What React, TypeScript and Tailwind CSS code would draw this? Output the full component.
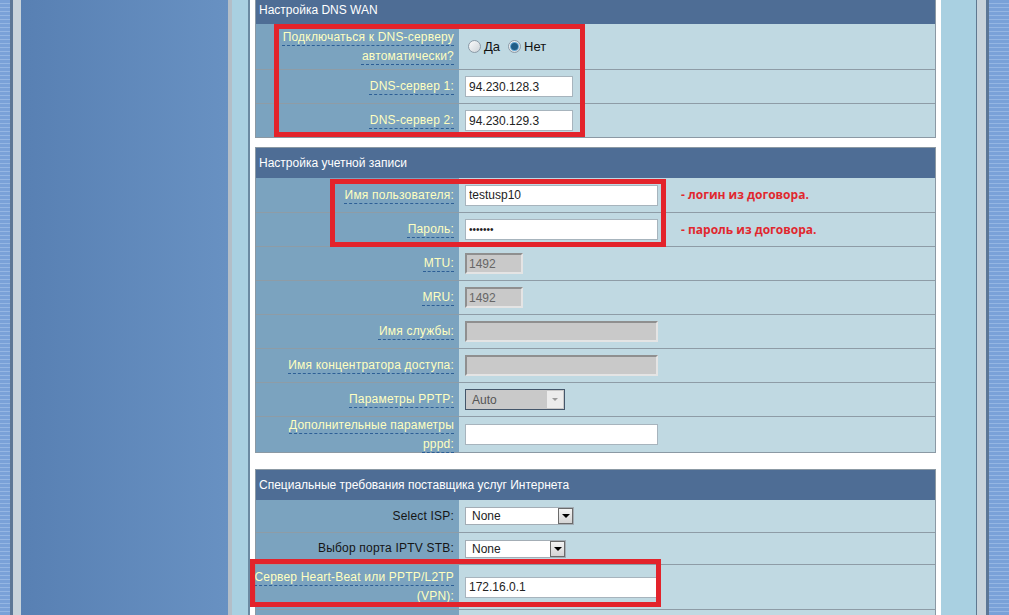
import type { ReactNode } from 'react';
import clsx from 'clsx';

const STRIPES =
  'bg-[image:repeating-linear-gradient(180deg,#7aa1d8_0px,#7aa1d8_3px,#95b6e3_3px,#95b6e3_4px)]';

function Row({
  h,
  label,
  plain,
  first,
  children,
}: {
  h: string;
  label: string[];
  plain?: boolean;
  first?: boolean;
  children?: ReactNode;
}) {
  return (
    <div className={clsx('flex', h, !first && 'border-t border-[#8e9ca6]')}>
      <div className="flex w-[203px] shrink-0 flex-col items-end justify-center bg-[#7ba3bf] pr-[5px] leading-[19px] tracking-[0.2px]">
        {label.map((line) => (
          <span
            key={line}
            className={clsx(
              'whitespace-nowrap',
              plain
                ? 'text-[#151515]'
                : 'text-[#ffffc0] underline decoration-dashed decoration-[#2d5f96] underline-offset-[4px]'
            )}
          >
            {line}
          </span>
        ))}
      </div>
      <div className="flex flex-1 items-center bg-[#c0d9e2] pl-[6px]">{children}</div>
    </div>
  );
}

function TextBox({ value, type = 'text' }: { value?: string; type?: string }) {
  return (
    <input
      readOnly
      type={type}
      value={value ?? ''}
      className={clsx(
        'h-[21px] w-[193px] border border-[#a7b4bd] bg-white pl-[3px] text-[#222] outline-none',
        type === 'password' ? 'text-[10px]' : 'text-[12px]'
      )}
    />
  );
}

function DnsBox({ value }: { value: string }) {
  return (
    <input
      readOnly
      value={value}
      className="h-[21px] w-[108px] border border-[#a7b4bd] bg-white pl-[3px] text-[12px] text-[#222] outline-none"
    />
  );
}

function Disabled({ value, wide }: { value?: string; wide?: boolean }) {
  return (
    <input
      readOnly
      value={value ?? ''}
      className={clsx(
        'h-[21px] border-2 border-t-[#8f8f8f] border-l-[#8f8f8f] border-r-[#e4e4e4] border-b-[#e4e4e4] bg-[#c9c9c9] pl-[2px] text-[12px] text-[#666] outline-none',
        wide ? 'w-[193px]' : 'w-[58px]'
      )}
    />
  );
}

function IspSelect({ w }: { w: string }) {
  return (
    <div className={clsx('flex h-[18px] items-center border border-[#a3adb5] bg-white', w)}>
      <span className="flex-1 pl-[6px] text-[12px] text-[#222]">None</span>
      <span className="flex h-[16px] w-[15px] items-center justify-center border border-[#6b6b6b] bg-linear-to-b from-[#f4f4f4] to-[#d4d4d4]">
        <span className="border-x-[4px] border-t-[4px] border-x-transparent border-t-black" />
      </span>
    </div>
  );
}

function Radio({ checked, text }: { checked?: boolean; text: string }) {
  return (
    <span className="flex items-center gap-[3px]">
      <span className="flex h-[13px] w-[13px] items-center justify-center rounded-full border border-[#8b9aa7] bg-linear-to-br from-[#fbfbfb] to-[#cdd4d9]">
        {checked && <span className="h-[7px] w-[7px] rounded-full bg-[#1f5c86] ring-1 ring-[#62a6d4]" />}
      </span>
      <span className="text-[13px] text-[#111]">{text}</span>
    </span>
  );
}

function Note({ children }: { children: ReactNode }) {
  return (
    <span className="ml-[23px] font-['Open_Sans',sans-serif] text-[12px] font-bold text-[#e0282e]">
      {children}
    </span>
  );
}

function Header({ children, short }: { children: ReactNode; short?: boolean }) {
  return (
    <div
      className={clsx(
        'flex items-center bg-[#4e6d95] pl-[3px] text-[12px] text-white',
        short ? 'h-[24px] pb-[4px]' : 'h-[30px]'
      )}
    >
      {children}
    </div>
  );
}

export default function App() {
  return (
    <div className="flex h-[615px] w-[1009px] overflow-hidden bg-white font-['Liberation_Sans',Arial,sans-serif] text-[12px]">
      {/* left frame */}
      <div className={clsx('w-[10px] shrink-0', STRIPES)} />
      <div className="w-[3px] shrink-0 bg-[#5b7696]" />
      <div className="w-[8px] shrink-0 bg-[#c8d3db]" />
      <div className="w-[207px] shrink-0 bg-linear-to-r from-[#5880b3] to-[#6891c2]" />
      <div className="w-[4px] shrink-0 bg-[#b3bec8]" />
      <div className="w-[16px] shrink-0 bg-[#a9d0e1]" />
      <div className="w-[2px] shrink-0 bg-[#6a8aa2]" />

      {/* content */}
      <main className="relative w-[691px] shrink-0 bg-white px-[5px]">
        <section className="border-x border-b border-[#8b99a4]">
          <Header short>Настройка DNS WAN</Header>
          <Row first h="h-[45px]" label={['Подключаться к DNS-серверу', 'автоматически?']}>
            <div className="flex items-center gap-[8px] pl-[3px]">
              <Radio text="Да" />
              <Radio checked text="Нет" />
            </div>
          </Row>
          <Row h="h-[34px]" label={['DNS-сервер 1:']}>
            <DnsBox value="94.230.128.3" />
          </Row>
          <Row h="h-[34px]" label={['DNS-сервер 2:']}>
            <DnsBox value="94.230.129.3" />
          </Row>
        </section>

        <section className="mt-[9px] border border-[#8b99a4]">
          <Header>Настройка учетной записи</Header>
          <Row first h="h-[34px]" label={['Имя пользователя:']}>
            <TextBox value="testusp10" />
            <Note>- логин из договора.</Note>
          </Row>
          <Row h="h-[34px]" label={['Пароль:']}>
            <TextBox type="password" value="1234567" />
            <Note>- пароль из договора.</Note>
          </Row>
          <Row h="h-[34px]" label={['MTU:']}>
            <Disabled value="1492" />
          </Row>
          <Row h="h-[34px]" label={['MRU:']}>
            <Disabled value="1492" />
          </Row>
          <Row h="h-[34px]" label={['Имя службы:']}>
            <Disabled wide />
          </Row>
          <Row h="h-[34px]" label={['Имя концентратора доступа:']}>
            <Disabled wide />
          </Row>
          <Row h="h-[34px]" label={['Параметры PPTP:']}>
            <div className="flex h-[21px] w-[100px] items-center border border-[#44566a] bg-[#c9c9c9]">
              <span className="flex-1 pl-[6px] text-[12px] text-[#555]">Auto</span>
              <span className="mr-[1px] flex h-[17px] w-[16px] items-center justify-center bg-[#ececec]">
                <span className="border-x-[3px] border-t-[3px] border-x-transparent border-t-[#9a9a9a]" />
              </span>
            </div>
          </Row>
          <Row h="h-[36px]" label={['Дополнительные параметры', 'pppd:']}>
            <TextBox />
          </Row>
        </section>

        <section className="mt-[16px] border border-[#8b99a4]">
          <Header>Специальные требования поставщика услуг Интернета</Header>
          <Row first plain h="h-[32px]" label={['Select ISP:']}>
            <IspSelect w="w-[109px]" />
          </Row>
          <Row plain h="h-[32px]" label={['Выбор порта IPTV STB:']}>
            <IspSelect w="w-[101px]" />
          </Row>
          <Row h="h-[45px]" label={['Сервер Heart-Beat или PPTP/L2TP', '(VPN):']}>
            <TextBox value="172.16.0.1" />
          </Row>
          <Row h="h-[34px]" label={[]} />
        </section>

        {/* red annotation frames */}
        <div className="pointer-events-none absolute left-[24px] top-[24px] h-[113px] w-[311px] border-[5px] border-[#e3232b]" />
        <div className="pointer-events-none absolute left-[80px] top-[179px] h-[68px] w-[336px] border-[5px] border-[#e3232b]" />
        <div className="pointer-events-none absolute left-0 top-[559px] h-[48px] w-[411px] border-[5px] border-[#e3232b]" />
      </main>

      {/* right frame */}
      <div className="w-[35px] shrink-0 bg-[#a9d0e1]" />
      <div className="w-[1px] shrink-0 bg-[#5f7890]" />
      <div className="w-[9px] shrink-0 bg-[#c8d3db]" />
      <div className="w-[3px] shrink-0 bg-[#5b7696]" />
      <div className={clsx('w-[20px] shrink-0', STRIPES)} />
    </div>
  );
}
